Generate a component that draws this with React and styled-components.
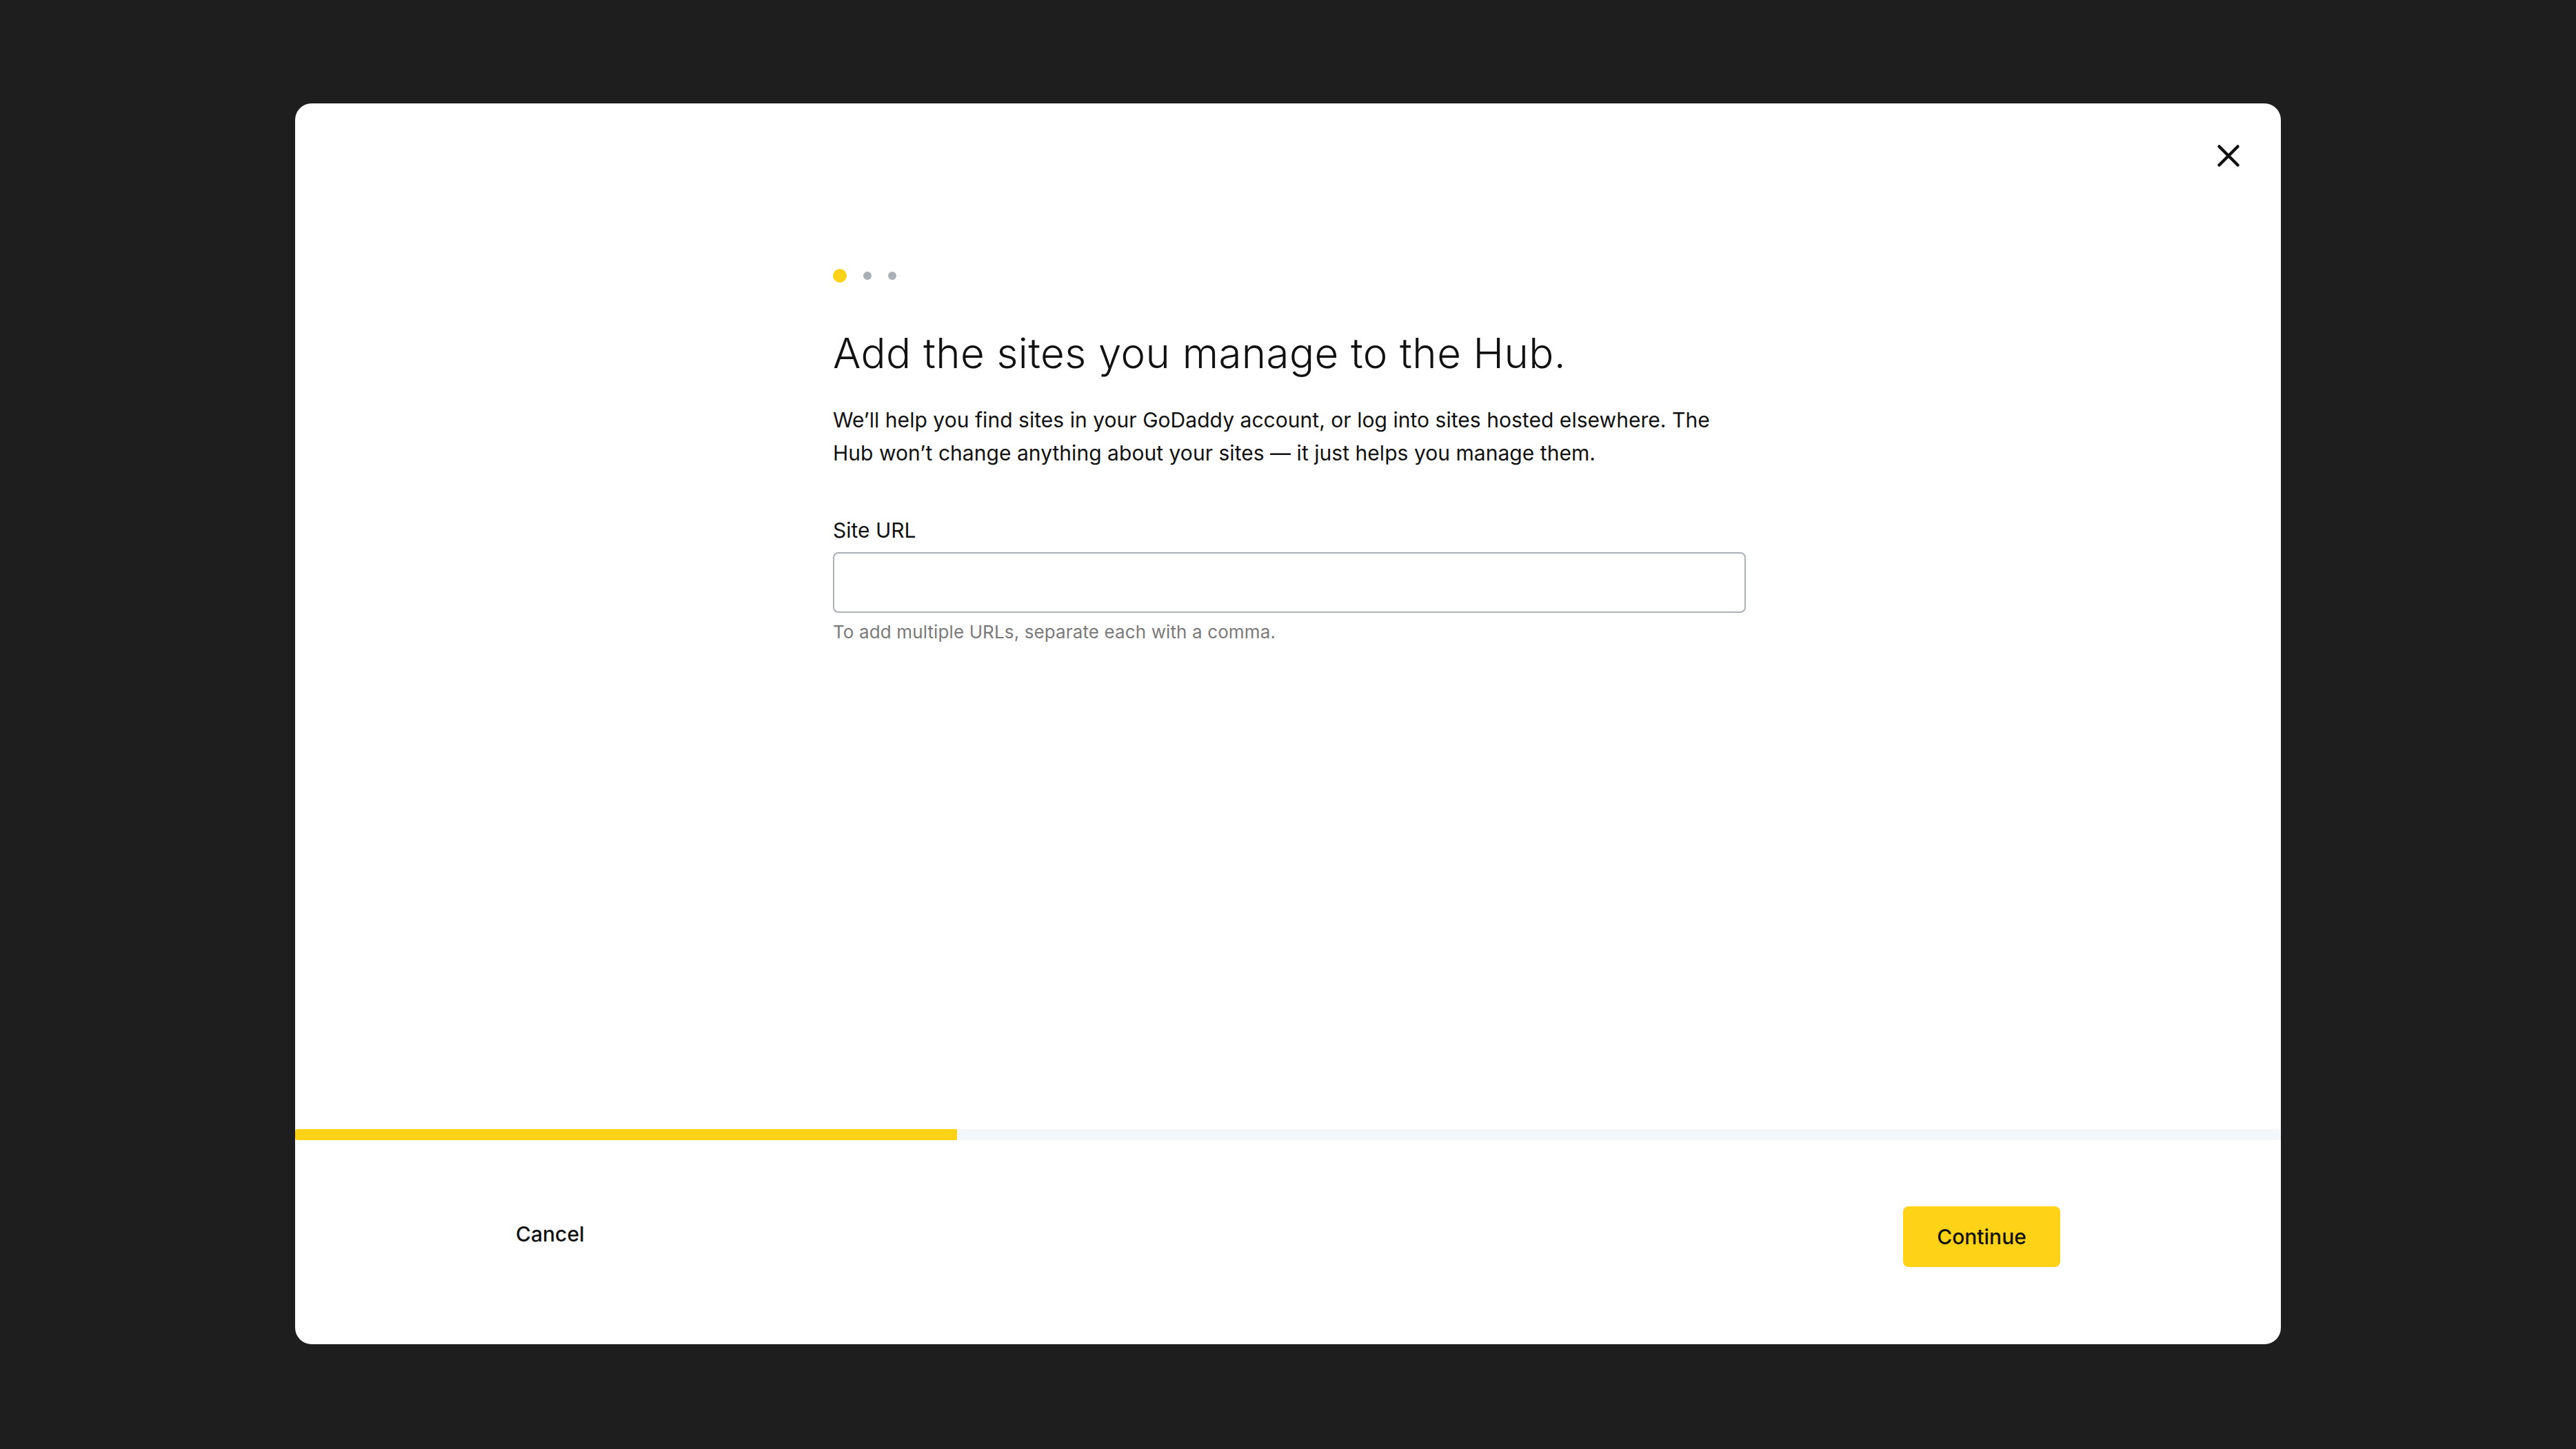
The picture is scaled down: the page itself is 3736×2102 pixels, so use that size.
import React from 'react';
import styled, { createGlobalStyle } from 'styled-components';

const GlobalStyle = createGlobalStyle`
  html, body {
    margin: 0;
    padding: 0;
    height: 100%;
    background: #1e1e1e;
  }
  #root {
    height: 100%;
  }
  * {
    box-sizing: border-box;
  }
`;

const FONT = '"Inter", "Liberation Sans", sans-serif';

const Backdrop = styled.div`
  display: flex;
  align-items: flex-start;
  justify-content: center;
  height: 100vh;
  padding-top: 150px;
  background: #1e1e1e;
  font-family: ${FONT};
  color: #111111;
`;

const Modal = styled.div`
  position: relative;
  display: flex;
  flex-direction: column;
  width: 2880px;
  height: 1800px;
  border-radius: 24px;
  background: #ffffff;
  overflow: hidden;
`;

const CloseButton = styled.button`
  position: absolute;
  top: 52px;
  right: 52px;
  display: flex;
  padding: 0;
  border: 0;
  background: none;
  color: #111111;
`;

const Body = styled.div`
  flex: 1;
  padding: 240px 0 0 780px;
`;

const Dots = styled.div`
  display: flex;
  align-items: center;
  gap: 24px;
  height: 20px;
`;

const Dot = styled.span`
  width: ${props => (props.active ? 20 : 12)}px;
  height: ${props => (props.active ? 20 : 12)}px;
  border-radius: 50%;
  background: ${props => (props.active ? '#fed317' : '#aab0b6')};
`;

const Title = styled.h1`
  margin: 62px 0 0;
  font-size: 60px;
  font-weight: 300;
  line-height: 80px;
  letter-spacing: 0.42px;
`;

const Intro = styled.p`
  width: 1328px;
  margin: 33px 0 0;
  font-size: 30px;
  font-weight: 400;
  line-height: 48px;
  letter-spacing: 0.04px;
`;

const Field = styled.div`
  width: 1324px;
  margin-top: 68px;
`;

const Label = styled.label`
  display: block;
  font-size: 30px;
  line-height: 40px;
`;

const Input = styled.input`
  display: block;
  width: 100%;
  height: 88px;
  margin-top: 12px;
  padding: 0 24px;
  border: 2px solid #aab0b6;
  border-radius: 8px;
  background: #ffffff;
  font: inherit;
  font-size: 30px;
  outline: none;
`;

const Hint = styled.div`
  margin-top: 12px;
  font-size: 26px;
  line-height: 32px;
  letter-spacing: 0.12px;
  color: #7a7a7a;
`;

const Progress = styled.div`
  height: 16px;
  background: #f4f7fa;
`;

const ProgressFill = styled.div`
  height: 100%;
  border-radius: 4px 0 0 4px;
  background: #fed317;
`;

const Footer = styled.div`
  display: flex;
  align-items: flex-start;
  justify-content: space-between;
  height: 296px;
  padding: 96px 320px 0;
`;

const TextButton = styled.button`
  height: 80px;
  padding: 0;
  border: 0;
  background: none;
  font-family: ${FONT};
  font-size: 30px;
  font-weight: 500;
  color: #111111;
`;

const PrimaryButton = styled.button`
  width: 228px;
  height: 88px;
  padding: 0;
  border: 0;
  border-radius: 8px;
  background: #fed317;
  font-family: ${FONT};
  font-size: 30px;
  font-weight: 500;
  color: #111111;
`;

const STEPS = [true, false, false];

export default function App() {
  return (
    <Backdrop>
      <GlobalStyle />
      <Modal>
        <CloseButton aria-label="Close">
          <svg width="48" height="48" viewBox="0 0 48 48" fill="none">
            <path
              d="M10.5 10.5 L37.5 37.5 M37.5 10.5 L10.5 37.5"
              stroke="currentColor"
              strokeWidth="4.5"
              strokeLinecap="round"
            />
          </svg>
        </CloseButton>
        <Body>
          <Dots>
            {STEPS.map((active, i) => (
              <Dot key={i} active={active} />
            ))}
          </Dots>
          <Title>Add the sites you manage to the Hub.</Title>
          <Intro>
            We’ll help you find sites in your GoDaddy account, or log into sites hosted elsewhere. The
            Hub won’t change anything about your sites — it just helps you manage them.
          </Intro>
          <Field>
            <Label htmlFor="site-url">Site URL</Label>
            <Input id="site-url" type="text" />
            <Hint>To add multiple URLs, separate each with a comma.</Hint>
          </Field>
        </Body>
        <Progress>
          <ProgressFill style={{ width: `${(1 / 3) * 100}%` }} />
        </Progress>
        <Footer>
          <TextButton>Cancel</TextButton>
          <PrimaryButton>Continue</PrimaryButton>
        </Footer>
      </Modal>
    </Backdrop>
  );
}
